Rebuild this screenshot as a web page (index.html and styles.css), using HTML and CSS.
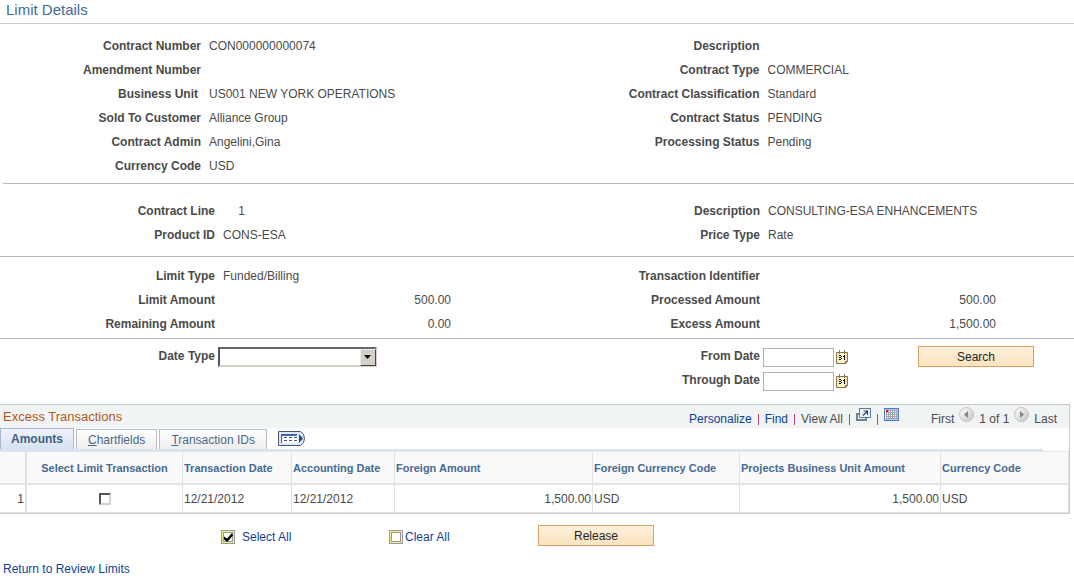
FILE: index.html
```html
<!DOCTYPE html>
<html lang="en">
<head>
<meta charset="utf-8">
<title>Limit Details</title>
<link rel="stylesheet" href="styles.css">
</head>
<body>
<h1 class="page-title">Limit Details</h1>
<main>
  <section class="section contract">
    <dl class="fields narrow">
      <div class="field"><dt>Contract Number</dt><dd>CON000000000074</dd></div>
      <div class="field"><dt>Amendment Number</dt><dd></dd></div>
      <div class="field"><dt class="inset">Business Unit</dt><dd>US001 NEW YORK OPERATIONS</dd></div>
      <div class="field"><dt>Sold To Customer</dt><dd>Alliance Group</dd></div>
      <div class="field"><dt>Contract Admin</dt><dd>Angelini,Gina</dd></div>
      <div class="field"><dt>Currency Code</dt><dd>USD</dd></div>
    </dl>
    <dl class="fields right">
      <div class="field"><dt>Description</dt><dd></dd></div>
      <div class="field"><dt>Contract Type</dt><dd>COMMERCIAL</dd></div>
      <div class="field"><dt>Contract Classification</dt><dd>Standard</dd></div>
      <div class="field"><dt>Contract Status</dt><dd>PENDING</dd></div>
      <div class="field"><dt>Processing Status</dt><dd>Pending</dd></div>
    </dl>
  </section>
  <section class="section line">
    <dl class="fields">
      <div class="field"><dt>Contract Line</dt><dd class="number">1</dd></div>
      <div class="field"><dt>Product ID</dt><dd>CONS-ESA</dd></div>
    </dl>
    <dl class="fields right">
      <div class="field"><dt>Description</dt><dd>CONSULTING-ESA ENHANCEMENTS</dd></div>
      <div class="field"><dt>Price Type</dt><dd>Rate</dd></div>
    </dl>
  </section>
  <section class="section limits">
    <dl class="fields">
      <div class="field"><dt>Limit Type</dt><dd>Funded/Billing</dd></div>
      <div class="field"><dt>Limit Amount</dt><dd class="amount">500.00</dd></div>
      <div class="field"><dt>Remaining Amount</dt><dd class="amount">0.00</dd></div>
    </dl>
    <dl class="fields right">
      <div class="field"><dt>Transaction Identifier</dt><dd></dd></div>
      <div class="field"><dt>Processed Amount</dt><dd class="amount">500.00</dd></div>
      <div class="field"><dt>Excess Amount</dt><dd class="amount">1,500.00</dd></div>
    </dl>
  </section>
  <form class="section search">
    <div class="fields">
      <div class="field"><label for="date-type">Date Type</label>
        <span class="select-box"><select id="date-type"><option></option></select><span class="select-arrow"></span></span>
      </div>
    </div>
    <div class="fields right search-right">
      <div>
        <div class="field"><label for="from-date">From Date</label><input class="date" id="from-date" type="text">
          <button class="icon-button" type="button" aria-label="Choose from date"><svg width="13" height="15" viewBox="0 0 13 15"><use href="#calendar"/></svg></button></div>
        <div class="field"><label for="through-date">Through Date</label><input class="date" id="through-date" type="text">
          <button class="icon-button" type="button" aria-label="Choose through date"><svg width="13" height="15" viewBox="0 0 13 15"><use href="#calendar"/></svg></button></div>
      </div>
      <button class="action" type="button">Search</button>
    </div>
  </form>

  <section class="transactions">
    <header class="grid-bar">
      <h2>Excess Transactions</h2>
      <nav class="grid-nav">
        <div class="grid-tools">
          <a href="#">Personalize</a><i class="bar"></i><a href="#">Find</a><i class="bar"></i><span>View All</span><i class="bar"></i>
          <button class="icon-button raised" type="button" aria-label="Open in new window"><svg width="15" height="13" viewBox="0 0 15 13" shape-rendering="crispEdges"><path d="M3 5.500H1v6h9V10" fill="none" stroke="#75808a" stroke-width="2"/><rect x="3.500" y=".5" width="11" height="9" fill="#eaf6fc" stroke="#5b7f9f"/><path d="M7 7.500l4.500-4.500M7.500 3h4v4" fill="none" stroke="#33424d" stroke-width="1.200" shape-rendering="auto"/></svg></button><i class="bar dark"></i>
          <button class="icon-button raised" type="button" aria-label="Download"><svg width="15" height="13" viewBox="0 0 15 13" shape-rendering="crispEdges"><rect x=".5" y=".5" width="14" height="12" fill="#fff" stroke="#4b7cc4"/><path d="M1 1.500h13M13.500 1v11M1 11.500h13" stroke="#a9c6ee" fill="none"/><path d="M4 2.500h9M2 4.500h11M2 6.500h11M2 8.500h11M2 10.500h11M2.500 4v7M4.500 2v9M6.500 2v9M8.500 2v9M10.500 2v9M12.500 2v9" stroke="#a3a3ab" fill="none"/><path d="M2 2h2v2H2z" fill="#f00"/></svg></button>
        </div>
        <div class="grid-pages">
          <span>First</span>
          <button class="icon-button raised" type="button" aria-label="Previous"><svg width="15" height="15" viewBox="0 0 15 15"><circle cx="7.500" cy="7.500" r="7" fill="url(#metal)" stroke="#c3c3c3"/><path d="M9 4v7L5 7.500z" fill="#858585"/></svg></button>
          <span>1 of 1</span>
          <button class="icon-button raised" type="button" aria-label="Next"><svg width="15" height="15" viewBox="0 0 15 15"><circle cx="7.500" cy="7.500" r="7" fill="url(#metal)" stroke="#c3c3c3"/><path d="M6 4v7l4-3.500z" fill="#858585"/></svg></button>
          <span>Last</span>
        </div>
      </nav>
    </header>
    <div class="tabs">
      <button class="tab active" type="button">Amounts</button>
      <button class="tab" type="button"><u>C</u>hartfields</button>
      <button class="tab" type="button"><u>T</u>ransaction IDs</button>
      <button class="icon-button show-all" type="button" aria-label="Show all columns"><svg width="27" height="15" viewBox="0 0 27 15"><path d="M.5.500h22q4 2 4 7t-4 7H.500z" fill="#dce9fa" stroke="#4d5674"/><g shape-rendering="crispEdges"><path d="M3 3h17v9H3z" fill="#fff"/><path d="M3 3h16v2H3z" fill="#4560b4"/><path d="M3.500 5v7" stroke="#4560b4"/><path d="M6 6.500h3m2 0h3m2 0h3M6 9.500h3m2 0h3m2 0h3" stroke="#4a5276"/></g><path d="M21 3v9l4-4.500z" fill="#354482"/></svg></button>
    </div>
    <table>
      <colgroup><col class="c-row"><col class="c-select"><col class="c-tdate"><col class="c-adate"><col class="c-famount"><col class="c-fcode"><col class="c-pamount"><col></colgroup>
      <thead>
        <tr><th></th><th class="center">Select Limit Transaction</th><th>Transaction Date</th><th>Accounting Date</th><th>Foreign Amount</th><th>Foreign Currency Code</th><th>Projects Business Unit Amount</th><th>Currency Code</th></tr>
      </thead>
      <tbody>
        <tr><td class="num">1</td><td class="center"><input class="row-check" type="checkbox" aria-label="Select limit transaction 1"></td><td>12/21/2012</td><td>12/21/2012</td><td class="num">1,500.00</td><td>USD</td><td class="num">1,500.00</td><td>USD</td></tr>
      </tbody>
    </table>
  </section>

  <div class="actions">
    <label class="bulk select-all"><input type="checkbox" checked>Select All</label>
    <label class="bulk clear-all"><input type="checkbox">Clear All</label>
    <button class="action" type="button">Release</button>
  </div>
  <a class="return" href="#">Return to Review Limits</a>
</main>
<svg class="defs" width="0" height="0" aria-hidden="true">
  <defs>
    <linearGradient id="metal" x2="1" y2="1"><stop offset="0" stop-color="#fff"/><stop offset="1" stop-color="#c4c4c4"/></linearGradient>
    <linearGradient id="paper" x2="1" y2="0"><stop offset="0" stop-color="#f3d990"/><stop offset=".5" stop-color="#fffbe8"/><stop offset="1" stop-color="#f3d990"/></linearGradient>
    <symbol id="calendar" viewBox="0 0 13 15">
      <path d="M.5 2.500h11v9l-2 2H.500z" fill="url(#paper)" stroke="#8b7748"/>
      <path d="M9.500 14v-2.500h2" fill="none" stroke="#8b7748"/>
      <path d="M3.500 0v4M8.500 0v4" stroke="#8b7748"/>
      <path d="M3 5.500h2M3 7.500h2M3 9.500h2M5.500 6v1M5.500 8v1M8.500 5v5M7 6.500h1" fill="none" stroke="#111" shape-rendering="crispEdges"/>
    </symbol>
  </defs>
</svg>
</body>
</html>
```
FILE: styles.css
```css
* { box-sizing: border-box; }
body {
  margin: 0;
  background: #fff;
  color: #4a4a4a;
  font: 12px/24px "Liberation Sans", Arial, sans-serif;
}
button, input, select { font: inherit; }
a { color: #0f3f96; text-decoration: none; }
.defs { display: block; }
.page-title {
  margin: 0;
  padding: 0 6px 3px;
  border-bottom: 1px solid #ccc;
  color: #426a9c;
  font-size: 15px;
  font-weight: 400;
  line-height: 20px;
}

.section {
  display: grid;
  grid-template-columns: 1fr 1fr;
  border-bottom: 1px solid #b8b8b8;
}
.contract { margin-left: 3px; padding: 10px 0 5px; }
.contract .fields { margin-left: -3px; }
.line { padding: 15px 0 9px; }
.limits { padding: 7px 0 2px; }
.search { padding: 6px 0 11px; border: 0; }
.fields { margin: 0; --label: 215px; }
.narrow { --label: 201px; }
.right { --label: 223px; }
.contract .right { margin-left: -2px; }
.field { display: flex; align-items: center; height: 24px; }
.field dt, .field label {
  flex: none;
  width: var(--label);
  text-align: right;
  font-weight: 700;
}
.field label { padding-bottom: 2px; }
.field dt.inset { padding-right: 3px; }
.field dd { margin: 0 0 0 8px; white-space: nowrap; }
.field .amount { width: 228px; text-align: right; }
.field .number { width: 22px; text-align: right; }

.select-box { position: relative; margin-left: 3px; width: 159px; height: 20px; }
.select-box select {
  display: block;
  width: 100%;
  height: 100%;
  appearance: none;
  border: 2px solid;
  border-color: #666 #d4d0c8 #d4d0c8 #555;
  border-radius: 0;
  background: #fff;
}
.select-arrow {
  position: absolute;
  top: 2px;
  right: 1px;
  width: 16px;
  height: 17px;
  border: 1px solid;
  border-color: #eee #444 #444 #eee;
  background: #d4d0c8;
  pointer-events: none;
}
.select-arrow::after {
  content: "";
  display: block;
  width: 7px;
  height: 4px;
  margin: 5px 3px;
  background: #000;
  clip-path: polygon(0 0, 100% 0, 50% 100%);
}
.date {
  width: 71px;
  height: 19px;
  margin-left: 3px;
  padding: 0 2px;
  border: 1px solid #b0b0b0;
  background: #fff;
}
.icon-button {
  display: block;
  flex: none;
  padding: 0;
  border: 0;
  background: none;
  line-height: 0;
}
.icon-button svg { display: block; }
.date + .icon-button { margin-left: 2px; }
.search-right { display: flex; align-items: flex-start; }
.action {
  width: 116px;
  height: 21px;
  padding: 0;
  border: 1px solid #d9a066;
  background: linear-gradient(#fdf0dc, #fbe3bd);
  color: #222;
  line-height: 18px;
}
.search .action { margin: 1px 40px 0 auto; }

.transactions { margin-right: 4px; border: 1px solid #c5c9d2; border-left: 0; }
.grid-bar {
  display: flex;
  justify-content: space-between;
  height: 23px;
  padding: 0 12px 0 3px;
  background: #f0f4f5;
}
.grid-bar h2 { margin: 0; color: #b05a20; font-size: 13px; font-weight: 400; line-height: 23px; }
.grid-nav { display: grid; grid-template-columns: 242px 126px; line-height: 28px; }
.grid-tools, .grid-pages { display: flex; align-items: center; height: 28px; }
.grid-tools { gap: 6px; }
.grid-pages { justify-content: space-between; }
.bar { width: 1px; height: 11px; background: #b8407c; }
.bar.dark { background: #a06050; }
.raised { align-self: flex-start; margin-top: 3px; }
.grid-pages .raised { margin-top: 2px; }

.tabs {
  display: flex;
  align-items: flex-end;
  gap: 2px;
  height: 23px;
  margin-right: 26px;
  border-bottom: 2px solid #d9e3f3;
}
.tab {
  height: 20px;
  padding: 0 11px;
  border: 1px solid #b6bcc8;
  border-bottom: 0;
  background: linear-gradient(#fff, #eee);
  color: #4b6685;
  line-height: 20px;
}
.tab.active {
  height: 21px;
  padding: 0 10px;
  border-color: #a9b7cc;
  background: linear-gradient(#eff3fa, #d6e2f2);
  color: #3f6083;
  font-weight: 700;
}
.show-all { align-self: center; margin-left: 9px; }

table {
  width: 100%;
  table-layout: fixed;
  border-collapse: separate;
  border-spacing: 0;
  border-top: 1px solid #e4e4e4;
}
.c-row { width: 27px; }
.c-select { width: 156px; }
.c-tdate { width: 109px; }
.c-adate { width: 103px; }
.c-famount { width: 198px; }
.c-fcode { width: 147px; }
.c-pamount { width: 201px; }
th, td { padding: 0 1px; border-right: 1px solid #e2e2e2; text-align: left; white-space: nowrap; }
th:first-child, td:first-child { border-right-width: 2px; }
th { height: 33px; border-bottom: 2px solid #e4e4e4; background: #f9f9f9; color: #466a93; font-size: 11px; }
td { height: 28px; border-bottom: 1px solid #e4e4e4; }
.center { text-align: center; }
.num { text-align: right; }
.row-check {
  display: block;
  width: 12px;
  height: 12px;
  margin: 0 auto;
  appearance: none;
  border: 2px solid;
  border-color: #555 #d4d0c8 #d4d0c8 #555;
}

.actions { display: flex; align-items: flex-start; padding: 11px 0 0 221px; }
.bulk { display: flex; align-items: center; color: #0f3f96; }
.bulk input {
  width: 14px;
  height: 14px;
  margin: 0;
  appearance: none;
  border: 1px solid #999;
  outline: 1px solid #999;
  outline-offset: -3px;
  background: #fff;
  box-shadow: inset 0 0 0 1px #f3f08a;
}
.bulk input:checked::before {
  content: "";
  display: block;
  width: 10px;
  height: 10px;
  margin: 1px;
  background: #000;
  clip-path: polygon(10% 45%, 40% 65%, 90% 10%, 100% 35%, 42% 100%, 10% 75%);
}
.select-all { width: 168px; gap: 7px; }
.clear-all { width: 149px; gap: 2px; }
.return { display: inline-block; margin: 8px 3px 0; }
```
